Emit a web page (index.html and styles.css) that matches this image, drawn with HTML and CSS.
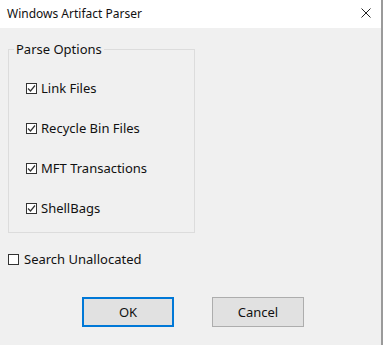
FILE: index.html
```html
<!DOCTYPE html>
<html lang="en">

<head>
  <meta charset="UTF-8" />
  <title>Windows Artifact Parser</title>
  <link rel="stylesheet" href="styles.css">
</head>

<body>
  <div class="window">
    <div class="titlebar">
      <span class="title">Windows Artifact Parser</span>
      <svg class="close" width="10" height="10" viewBox="0 0 10 10">
        <path d="M0.5 0.5 L9.5 9.5 M9.5 0.5 L0.5 9.5" stroke="#222" stroke-width="1" fill="none" />
      </svg>
    </div>

    <div class="content">
      <fieldset class="group">
        <legend>Parse Options</legend>
        <div class="options">
          <label class="check"><span class="box"><svg width="9" height="9" viewBox="0 0 9 9"><path d="M1 4.5 L3.5 7 L8 1.5" stroke="#333" stroke-width="1.2" fill="none" /></svg></span>Link Files</label>
          <label class="check"><span class="box"><svg width="9" height="9" viewBox="0 0 9 9"><path d="M1 4.5 L3.5 7 L8 1.5" stroke="#333" stroke-width="1.2" fill="none" /></svg></span>Recycle Bin Files</label>
          <label class="check"><span class="box"><svg width="9" height="9" viewBox="0 0 9 9"><path d="M1 4.5 L3.5 7 L8 1.5" stroke="#333" stroke-width="1.2" fill="none" /></svg></span>MFT Transactions</label>
          <label class="check"><span class="box"><svg width="9" height="9" viewBox="0 0 9 9"><path d="M1 4.5 L3.5 7 L8 1.5" stroke="#333" stroke-width="1.2" fill="none" /></svg></span>ShellBags</label>
        </div>
      </fieldset>

      <label class="check unallocated"><span class="box"></span>Search Unallocated</label>

      <div class="buttons">
        <button class="btn default">OK</button>
        <button class="btn">Cancel</button>
      </div>
    </div>
  </div>
</body>

</html>
```

FILE: styles.css
```css
body {
  margin: 0;
  font-family: "Noto Sans", "Open Sans", sans-serif;
  font-size: 12px;
  color: #111;
  background-color: #f0f0f0;
}

.window {
  width: 381px;
  height: 345px;
  border-right: 2px solid #9a9a9a;
  background-color: #f0f0f0;
}

.titlebar {
  height: 28px;
  background-color: #fff;
  display: flex;
  align-items: center;
  justify-content: space-between;
  padding: 0 10px 0 7px;
}

.title {
  font-size: 12px;
  margin-top: -1px;
}

.close {
  margin-top: -2px;
}

.content {
  padding: 0 0 0 8px;
}

.group {
  margin: 13px 0 0 0;
  width: 187px;
  box-sizing: border-box;
  padding: 0 0 14px 5px;
  border: 1px solid #dcdcdc;
}

.group legend {
  padding: 0 2px;
  font-size: 13px;
  line-height: 16px;
}

.options {
  display: flex;
  flex-direction: column;
  gap: 20px;
  padding: 21px 0 0 12px;
}

.check {
  display: flex;
  align-items: center;
  height: 20px;
  font-size: 13px;
}

.box {
  width: 11px;
  height: 11px;
  border: 1px solid #333;
  box-sizing: border-box;
  background-color: #fff;
  margin-right: 4px;
  display: flex;
  align-items: center;
  justify-content: center;
}

.unallocated {
  margin-top: 16px;
}

.unallocated .box {
  margin-right: 5px;
}

.buttons {
  display: flex;
  gap: 38px;
  padding: 28px 0 0 74px;
}

.btn {
  width: 92px;
  height: 30px;
  background-color: #e1e1e1;
  border: 1px solid #adadad;
  font-family: "Noto Sans", "Open Sans", sans-serif;
  font-size: 13px;
  color: #111;
  padding: 0;
}

.btn.default {
  border: 2px solid #0078d7;
}
```
